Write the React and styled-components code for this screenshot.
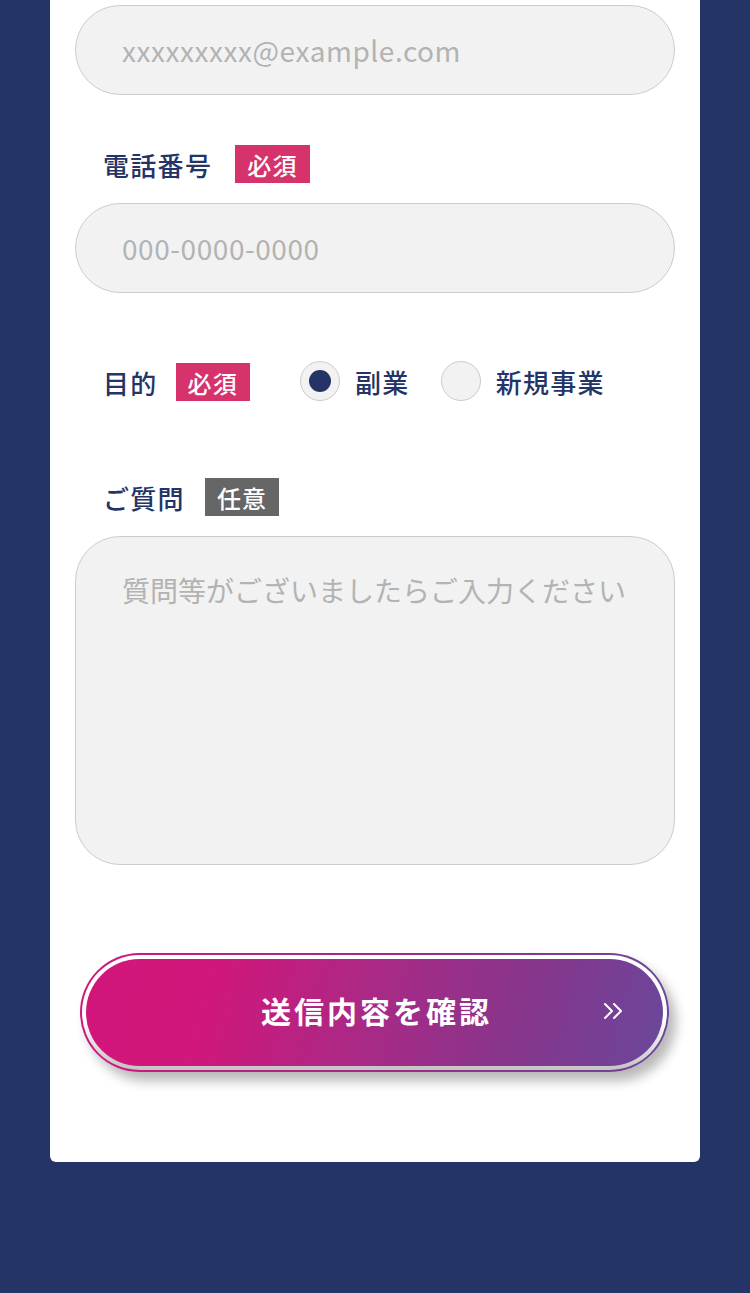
import React, { useState } from "react";
import styled, { createGlobalStyle } from "styled-components";

const navy = "#243466";
const pink = "#d6336c";

const GlobalStyle = createGlobalStyle`
  html, body {
    margin: 0;
    padding: 0;
    background-color: ${navy};
  }
  * {
    box-sizing: border-box;
  }
`;

const Page = styled.div`
  padding: 0 50px 131px;
  font-family: "Noto Sans CJK JP", "Noto Sans", sans-serif;
`;

const Card = styled.form`
  background-color: #ffffff;
  border-radius: 0 0 6px 6px;
  padding: 5px 25px 90px;
`;

const Field = styled.div`
  display: flex;
  flex-direction: column;
  gap: 20px;
  margin-top: ${(p) => p.top || 0}px;
`;

const LabelRow = styled.div`
  display: flex;
  align-items: center;
  gap: ${(p) => p.gap || 20}px;
  padding-left: ${(p) => (p.flush ? 0 : 28)}px;
  height: 38px;
`;

const Label = styled.span`
  font-size: 26px;
  font-weight: 500;
  letter-spacing: 0.05em;
  color: ${navy};
`;

const Badge = styled.span`
  display: inline-flex;
  align-items: center;
  justify-content: center;
  height: 38px;
  padding: 0 12px;
  font-size: 24px;
  font-weight: 500;
  letter-spacing: 0.05em;
  color: #ffffff;
  background-color: ${(p) => (p.optional ? "#666666" : pink)};
`;

const Input = styled.input`
  width: 100%;
  height: 90px;
  padding: 0 46px;
  border: 1px solid #cccccc;
  border-radius: 45px;
  background-color: #f2f2f2;
  font-family: inherit;
  font-size: 28px;
  letter-spacing: 0.02em;
  color: ${navy};
  outline: none;

  &::placeholder {
    color: #b3b3b3;
  }
`;

const TextArea = styled.textarea`
  display: block;
  width: 100%;
  height: 329px;
  padding: 32px 46px;
  border: 1px solid #cccccc;
  border-radius: 45px;
  background-color: #f2f2f2;
  font-family: inherit;
  font-size: 28px;
  line-height: 1.5;
  resize: none;
  color: ${navy};
  outline: none;

  &::placeholder {
    color: #b3b3b3;
  }
`;

const RadioRow = styled.div`
  display: flex;
  align-items: center;
  margin-top: 68px;
  padding-left: 28px;
  height: 42px;
`;

const RadioGroup = styled.div`
  display: flex;
  align-items: center;
  gap: 31px;
  margin: 0 0 2px 50px;
`;

const RadioOption = styled.label`
  display: flex;
  align-items: center;
  gap: 15px;
  cursor: pointer;
`;

const RadioInput = styled.input`
  appearance: none;
  margin: 0;
  width: 40px;
  height: 40px;
  border-radius: 50%;
  border: 1px solid #cccccc;
  background-color: #f2f2f2;
  display: grid;
  place-items: center;
  cursor: pointer;

  &::after {
    content: "";
    width: 22px;
    height: 22px;
    border-radius: 50%;
    background-color: ${navy};
    transform: scale(0);
  }

  &:checked::after {
    transform: scale(1);
  }
`;

const RadioText = styled.span`
  font-size: 26px;
  font-weight: 500;
  letter-spacing: 0.05em;
  color: ${navy};
`;

const ButtonWrap = styled.div`
  margin-top: 88px;
  padding: 0 6px 0 5px;
`;

const OuterRing = styled.button`
  display: block;
  width: 100%;
  padding: 2px;
  border: none;
  border-radius: 60px;
  background: linear-gradient(90deg, #d0177b 0%, #a02a87 55%, #6a4799 100%);
  box-shadow: 7px 9px 12px rgba(0, 0, 0, 0.28);
  cursor: pointer;
  font-family: inherit;
`;

const WhiteRing = styled.div`
  padding: 4px;
  border-radius: 60px;
  background: linear-gradient(180deg, #ffffff 55%, #c4c4c4 100%);
`;

const Fill = styled.div`
  position: relative;
  display: flex;
  align-items: center;
  justify-content: center;
  height: 107px;
  border-radius: 54px;
  background: linear-gradient(105deg, #d3157a 0%, #d0177b 22%, #a82a86 50%, #86368c 75%, #6a479b 100%);
`;

const ButtonText = styled.span`
  font-size: 30px;
  font-weight: 700;
  letter-spacing: 3px;
  line-height: 1;
  color: #ffffff;
  padding: 0 0 6px 4px;
`;

const Chevrons = styled.span`
  position: absolute;
  right: 38px;
  top: 50%;
  transform: translateY(-60%);
  display: flex;
`;

export default function App() {
  const [purpose, setPurpose] = useState("side");

  return (
    <>
      <GlobalStyle />
      <Page>
        <Card onSubmit={(e) => e.preventDefault()}>
          <Input type="email" placeholder="xxxxxxxxx@example.com" />

          <Field top={50}>
            <LabelRow gap={23}>
              <Label>電話番号</Label>
              <Badge>必須</Badge>
            </LabelRow>
            <Input type="tel" placeholder="000-0000-0000" />
          </Field>

          <RadioRow>
            <LabelRow gap={18} flush>
              <Label>目的</Label>
              <Badge>必須</Badge>
            </LabelRow>
            <RadioGroup>
              <RadioOption>
                <RadioInput
                  type="radio"
                  name="purpose"
                  checked={purpose === "side"}
                  onChange={() => setPurpose("side")}
                />
                <RadioText>副業</RadioText>
              </RadioOption>
              <RadioOption>
                <RadioInput
                  type="radio"
                  name="purpose"
                  checked={purpose === "new"}
                  onChange={() => setPurpose("new")}
                />
                <RadioText>新規事業</RadioText>
              </RadioOption>
            </RadioGroup>
          </RadioRow>

          <Field top={75}>
            <LabelRow>
              <Label>ご質問</Label>
              <Badge optional>任意</Badge>
            </LabelRow>
            <TextArea placeholder="質問等がございましたらご入力ください" />
          </Field>

          <ButtonWrap>
            <OuterRing type="submit">
              <WhiteRing>
                <Fill>
                  <ButtonText>送信内容を確認</ButtonText>
                  <Chevrons>
                    <svg width="22" height="20" viewBox="0 0 22 20" fill="none" stroke="#ffffff" strokeWidth="2" strokeLinecap="round" strokeLinejoin="round">
                      <path d="M2 3l7 7-7 7" />
                      <path d="M11 3l7 7-7 7" />
                    </svg>
                  </Chevrons>
                </Fill>
              </WhiteRing>
            </OuterRing>
          </ButtonWrap>
        </Card>
      </Page>
    </>
  );
}
